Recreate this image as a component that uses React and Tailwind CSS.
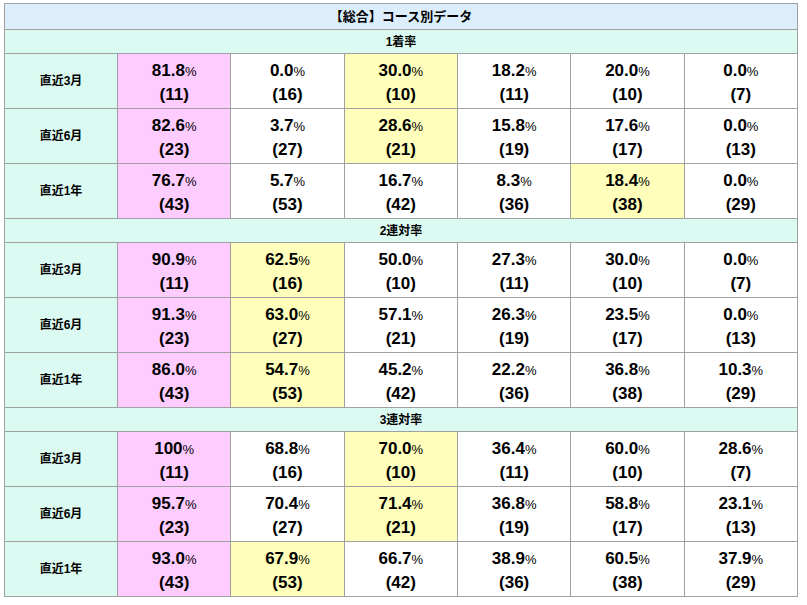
import React from "react";

const SECTIONS = [
  {
    title: "1着率",
    rows: [
      { label: "直近3月", cells: [["81.8", "11", "p"], ["0.0", "16"], ["30.0", "10", "y"], ["18.2", "11"], ["20.0", "10"], ["0.0", "7"]] },
      { label: "直近6月", cells: [["82.6", "23", "p"], ["3.7", "27"], ["28.6", "21", "y"], ["15.8", "19"], ["17.6", "17"], ["0.0", "13"]] },
      { label: "直近1年", cells: [["76.7", "43", "p"], ["5.7", "53"], ["16.7", "42"], ["8.3", "36"], ["18.4", "38", "y"], ["0.0", "29"]] },
    ],
  },
  {
    title: "2連対率",
    rows: [
      { label: "直近3月", cells: [["90.9", "11", "p"], ["62.5", "16", "y"], ["50.0", "10"], ["27.3", "11"], ["30.0", "10"], ["0.0", "7"]] },
      { label: "直近6月", cells: [["91.3", "23", "p"], ["63.0", "27", "y"], ["57.1", "21"], ["26.3", "19"], ["23.5", "17"], ["0.0", "13"]] },
      { label: "直近1年", cells: [["86.0", "43", "p"], ["54.7", "53", "y"], ["45.2", "42"], ["22.2", "36"], ["36.8", "38"], ["10.3", "29"]] },
    ],
  },
  {
    title: "3連対率",
    rows: [
      { label: "直近3月", cells: [["100", "11", "p"], ["68.8", "16"], ["70.0", "10", "y"], ["36.4", "11"], ["60.0", "10"], ["28.6", "7"]] },
      { label: "直近6月", cells: [["95.7", "23", "p"], ["70.4", "27"], ["71.4", "21", "y"], ["36.8", "19"], ["58.8", "17"], ["23.1", "13"]] },
      { label: "直近1年", cells: [["93.0", "43", "p"], ["67.9", "53", "y"], ["66.7", "42"], ["38.9", "36"], ["60.5", "38"], ["37.9", "29"]] },
    ],
  },
];

function StatCell({ rate, count, mark }) {
  const bg = mark === "p" ? "bg-[#ffccff]" : mark === "y" ? "bg-[#ffffbb]" : "bg-white";
  return (
    <td className={`border border-[#a0a0a0] pt-[2px] text-center align-middle ${bg}`}>
      <div className="text-[17px] font-bold leading-[23px] text-black">
        {rate}
        <span className="text-[13px] font-normal">%</span>
      </div>
      <div className="text-[17px] font-bold leading-[23px] text-black">({count})</div>
    </td>
  );
}

export default function App() {
  return (
    <div className="min-h-[605px] bg-white pl-[4px] pt-[3px]" style={{ fontFamily: '"Liberation Sans", Arial, "Noto Sans CJK JP", sans-serif' }}>
      <table className="w-[794px] table-fixed border-collapse border border-[#a0a0a0]">
        <colgroup>
          <col className="w-[113px]" />
          <col />
          <col />
          <col />
          <col />
          <col />
          <col />
        </colgroup>
        <tbody>
          <tr className="h-[26px]">
            <th colSpan={7} className="border border-[#a0a0a0] bg-[#dcedfb] text-center text-[13px] font-bold text-black">
              【総合】コース別データ
            </th>
          </tr>
          {SECTIONS.map((section) => (
            <React.Fragment key={section.title}>
              <tr className="h-[24px]">
                <th colSpan={7} className="border border-[#a0a0a0] bg-[#dbfbf2] text-center text-[12px] font-bold text-black">
                  {section.title}
                </th>
              </tr>
              {section.rows.map((row) => (
                <tr key={row.label} className="h-[55px]">
                  <th className="border border-[#a0a0a0] bg-[#dbfbf2] text-center text-[12px] font-bold text-black">
                    {row.label}
                  </th>
                  {row.cells.map(([rate, count, mark], i) => (
                    <StatCell key={i} rate={rate} count={count} mark={mark} />
                  ))}
                </tr>
              ))}
            </React.Fragment>
          ))}
        </tbody>
      </table>
    </div>
  );
}
